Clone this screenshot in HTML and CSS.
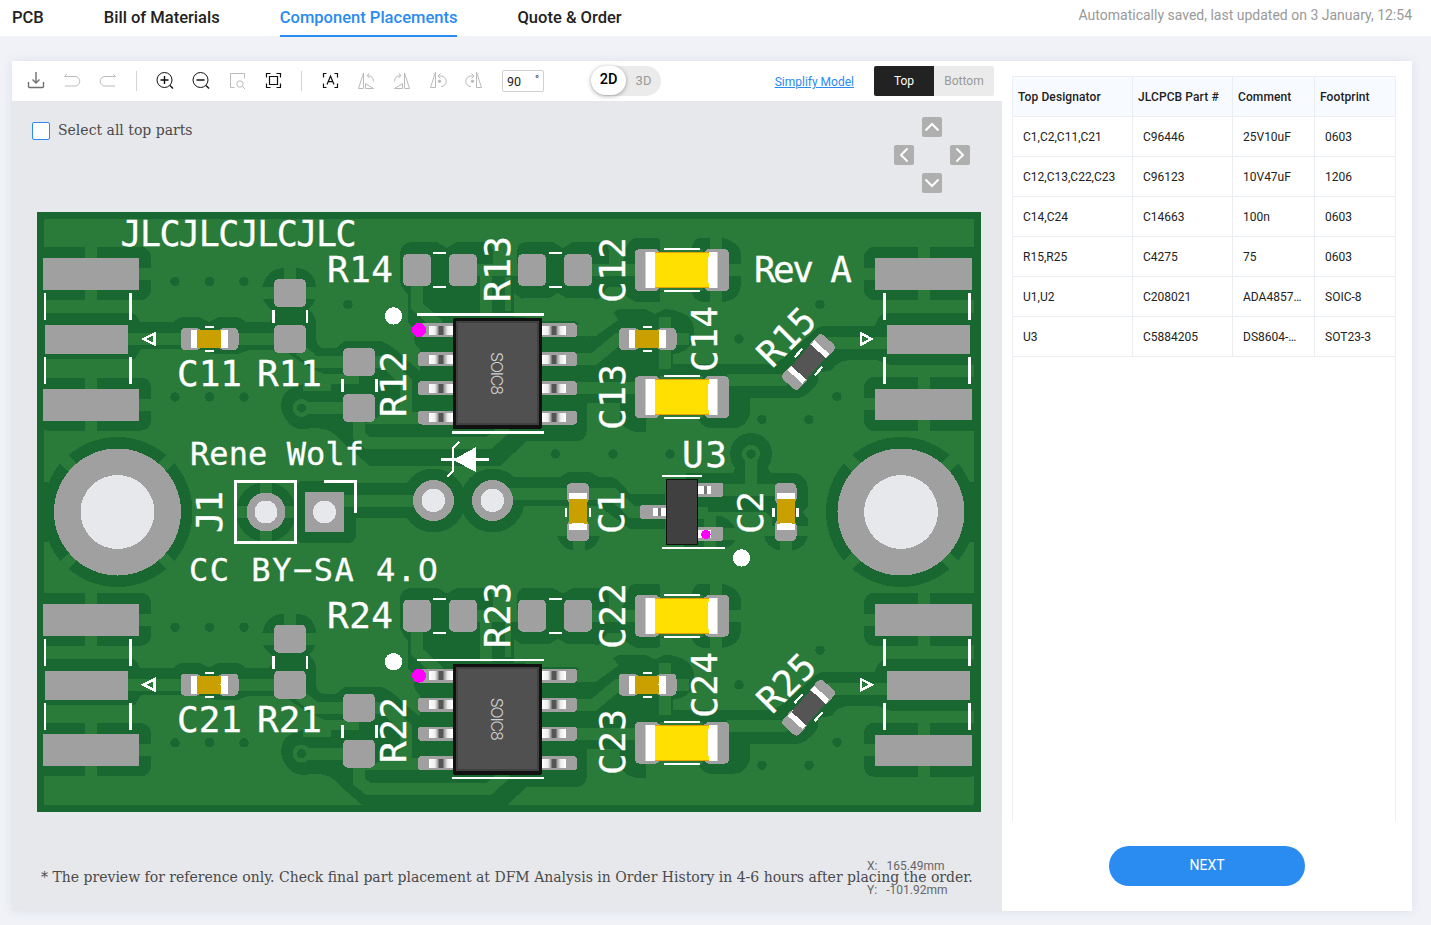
FILE: index.html
```html
<!DOCTYPE html>
<html lang="en">
<head>
<meta charset="utf-8">
<title>Component Placements</title>
<link rel="stylesheet" href="styles.css">
</head>
<body>
<header class="topbar">
  <nav class="tabs">
    <a class="tab">PCB</a><a class="tab">Bill of Materials</a><a class="tab active">Component Placements</a><a class="tab">Quote &amp; Order</a>
  </nav>
  <span class="saved">Automatically saved, last updated on 3 January, 12:54</span>
</header>
<main class="workspace">
  <section class="editor">
    <div class="toolbar">
      <div class="tools">
        <svg class="icon" viewBox="0 0 18 18" stroke="#707070"><path d="M1.500 10v4.500q0 1 1 1h13q1 0 1-1V10M9 0v10.500M5.500 7.500 9 11l3.500-3.500" stroke-width="1.400"/></svg>
        <svg class="icon" viewBox="0 0 18 18" stroke="#bbb"><path d="M4 2 1.500 4.500H12a4.500 4.500 0 0 1 0 9.500H2"/></svg>
        <svg class="icon" viewBox="0 0 18 18" stroke="#bbb"><path d="m14 2 2.500 2.500H6A4.500 4.500 0 0 0 6 14h10"/></svg>
        <i class="rule"></i>
        <svg class="icon" viewBox="0 0 18 18" stroke="#111"><circle cx="8.500" cy="8" r="7.500"/><path d="M8.500 4v8M4.500 8h8M14 13.500l3 3" stroke-width="1.400"/></svg>
        <svg class="icon" viewBox="0 0 18 18" stroke="#111"><circle cx="8.500" cy="8" r="7.500"/><path d="M4.500 8h8M14 13.500l3 3" stroke-width="1.400"/></svg>
        <svg class="icon" viewBox="0 0 18 18" stroke="#bbb"><path d="M6.500 15.500h-4v-14h14v5"/><circle cx="12" cy="12" r="3.200"/><path d="m14.500 14.500 2.500 2.500"/></svg>
        <svg class="icon" viewBox="0 0 18 18" stroke="#111"><path d="M2.500 5.500v-4h4M12.500 1.500h4v4M16.500 11.500v4h-4M6.500 15.500h-4v-4M5.500 4.500h8v8h-8z" stroke-width="1.200"/></svg>
        <i class="rule"></i>
        <svg class="icon" viewBox="0 0 18 18" stroke="#111"><path d="M2.500 5.500v-4h3M13.500 1.500h3v4M16.500 11.500v4h-3M5.500 15.500h-3v-4M6 12.500 9.500 4l3.500 8.500M7.200 9.700h4.600" stroke-width="1.200"/></svg>
        <svg class="icon" viewBox="0 0 18 18" stroke="#bbb"><path d="M6.500 1v15.500h-5zM8.500 16.500h8l-8-5zM16.500 9.500Q16.500 4 10.500 3.500M12.500 1l-2.500 2.500L12.500 6"/></svg>
        <svg class="icon flip" viewBox="0 0 18 18" stroke="#bbb"><path d="M6.500 1v15.500h-5zM8.500 16.500h8l-8-5zM16.500 9.500Q16.500 4 10.500 3.500M12.500 1l-2.500 2.500L12.500 6"/></svg>
        <svg class="icon" viewBox="0 0 18 18" stroke="#bbb"><path d="M6.500 0v15.500h-5zM9 4h3a5.300 5.300 0 0 1 0 10.600M11.500 1.500 9 4l2.500 2.500"/><circle cx="10.500" cy="9.300" r="1.200" fill="#bbb"/></svg>
        <svg class="icon flip" viewBox="0 0 18 18" stroke="#bbb"><path d="M6.500 0v15.500h-5zM9 4h3a5.300 5.300 0 0 1 0 10.600M11.500 1.500 9 4l2.500 2.500"/><circle cx="10.500" cy="9.300" r="1.200" fill="#bbb"/></svg>
      </div>
      <div class="angle"><span>90</span><span class="deg">°</span></div>
      <div class="dim"><b>2D</b><span>3D</span></div>
      <a class="simplify">Simplify Model</a>
      <div class="sides"><span class="on">Top</span><span>Bottom</span></div>
    </div>
    <div class="canvas">
      <div class="canvas-head">
        <label class="select-all"><i class="box"></i>Select all top parts</label>
        <div class="dpad">
          <svg class="arrow up" viewBox="0 0 20 20"><path d="m3.500 13.500 6.500-6.500 6.500 6.500"/></svg>
          <svg class="arrow left" viewBox="0 0 20 20"><path d="M13.500 3.500 7 10l6.500 6.500"/></svg>
          <svg class="arrow right" viewBox="0 0 20 20"><path d="m6.500 3.500 6.500 6.500-6.500 6.500"/></svg>
          <svg class="arrow down" viewBox="0 0 20 20"><path d="m3.500 6.500 6.500 6.500 6.500-6.500"/></svg>
        </div>
      </div>
      <svg class="board" viewBox="37 212 944 600" shape-rendering="crispEdges">
        <defs>
          <linearGradient id="pin"><stop offset="0" stop-color="#fff"/><stop offset=".25" stop-color="#eee"/><stop offset=".38" stop-color="#999"/><stop offset=".42" stop-color="#555"/><stop offset=".58" stop-color="#555"/><stop offset=".62" stop-color="#999"/><stop offset=".78" stop-color="#eee"/><stop offset="1" stop-color="#fff"/></linearGradient>
          <g id="soic-pin"><rect x="418" y="-7" width="40" height="14" rx="3.500" class="pad"/><rect x="429" y="-4.500" width="24" height="9" fill="url(#pin)"/><rect x="538" y="-7" width="39" height="14" rx="3.500" class="pad"/><rect x="542" y="-4.500" width="24" height="9" fill="url(#pin)"/></g>
          <g id="cap-big">
            <path class="pad" d="M640 249h16l4 3h44l4-3h16q5 0 5 5v32q0 5-5 5h-16l-4-3h-44l-4 3h-16q-5 0-5-5v-32q0-5 5-5z"/>
            <rect class="hide-gap" x="660" y="249" width="43" height="42"/>
            <rect x="645" y="252" width="73" height="36" fill="#fff"/>
            <path d="M645.500 252v36M717.500 252v36" stroke="#d0d0d0"/>
            <path d="M655 252h54q-2.500 18 0 36h-54z" fill="#ffe000"/>
            <path d="M655 252.500h54M655 287.500h54" stroke="#e8a000"/>
            <path class="silk" stroke-width="2" d="M664 249h36M664 291h36"/>
          </g>
          <g id="cap-small">
            <path class="pad" d="M-24-11h11l4 2V9l-4 2h-11q-5 0-5-5V-6q0-5 5-5zM24-11H13l-4 2V9l4 2h11q5 0 5-5V-6q0-5-5-5z"/>
            <rect x="-19" y="-9" width="37" height="18" fill="#fff"/><path d="M-13-9h25q-2 9 0 18h-25z" fill="#c9a000"/>
            <path class="silk" stroke-width="2.300" d="M-4.500-12h9M-4.500 12h9"/>
          </g>
          <g id="cross-pad"><rect x="37" y="247" width="114" height="53" rx="10" class="clear"/><path class="trace" d="M91 245v57M139 274h14"/><rect x="43" y="258" width="96" height="32" class="pad"/></g>
          <g id="channel">
            <g class="clear">
              <path d="M37 313h94q5 0 9 9h34q4-5 10-5h15l10 5 10-5h15q7 0 11 5h24l7-7-5-6q-7-6-9-12v-9q4-19 22-20h12q19 1 20 20v9q-1 6-7 12 7 7 7 14v17q2 8 8 8h12l9-7h36q14 6 22 16l17 14V350q-8-8-5-15 2-5-7-12v-28q-8-8-8-16v-27q2-9 11-10h26l10 6 10-6h26q10 0 10 10v12h24v-12q0-10 10-10h26l10 6 10-6h26q10 0 10 10v12h14q2-26 14-26h20q14 5 15 16l-1 33q-4 15-15 15h-20q-13-5-14-15h-14l-9 12h-31l-10-6-10 6h-26l-8-6v24h40q30 0 32 20l25-22q5-6 12-6h22l10 5 10-5q28 2 29 21t-16 23l-5 1v10h60v35h-60v19q0 13-15 14h-22q-15-3-16-15v-14h-33v24q0 14-10 14h-50l-27 25H370l-28-24-8-8q-6-6-22-6-16 4-24-6-12-14-3-29 10-11 34-9h40v-10h-35q-20-8-40-24H249l-11 4h-24l-10-4-20-1H141l-6 10H37z"/>
              <path d="M700 238h23q18 5 18 18v26q0 18-18 20h-20q-12-2-12-15v-35q2-14 9-14z"/>
              <path d="M671 364h95q10 0 16-5l33-29q5-4 10-4h50q2-8 8-12l8-1h90v52H890l-13-5h-27q-14 1-18 10-6 2-14 2v8q0 5-11 14-6 5-14 4h-43v16q-5 15-18 14h-22q-12-2-12-15z"/>
              <rect x="864" y="247" width="117" height="53" rx="10"/><rect x="864" y="377" width="117" height="54" rx="10"/>
            </g>
            <g class="trace">
              <path d="M128 339h147M300 350l15 12h32M303 408h42M303 385h28M359 420v16l9 7h121l18-16M417 284v22l22 20M375 362h11l20 20v26l-18 10h30M477 270h44M486 270v46M590 270h48M577 359h17l24-20h10M577 388h62M727 380h57l12-7M827 343h62M665 317v52M716 237v66M728 270h14M675 339h14M577 330h17l21-15M290 266v16M261 293h59" class="trace"/>
              <path d="M924 245v57M924 375v57M862 274h16M862 404h16M541 312h25M45 307h92M45 371h92M890 307h84M890 371h84"/>
            </g>
            <path class="fill-light" d="M523 298h70l16 7-20 25-10-9H525zM646 419l13-7 15 7v15h-28zM660 237h32v12h-32zM660 292h32v11h-32zM505 277h6v34h-6z"/>
            <circle cx="301.500" cy="408" r="9" class="fill-light"/><circle cx="301.500" cy="408" r="4.500" class="clear"/>
            <use href="#cross-pad"/><use href="#cross-pad" y="130.500"/>
            <g class="pad">
              <rect x="45" y="325" width="83" height="29"/><rect x="875" y="258" width="97" height="32"/><rect x="887" y="325" width="83" height="29"/><rect x="875" y="389" width="97" height="31"/>
              <rect x="274" y="279" width="32" height="28" rx="5"/><rect x="274" y="325" width="32" height="28" rx="5"/><rect x="343" y="348" width="32" height="28" rx="5"/><rect x="343" y="394" width="32" height="28" rx="5"/>
              <rect x="403" y="254" width="28" height="32" rx="5"/><rect x="449" y="254" width="28" height="32" rx="5"/><rect x="518" y="254" width="28" height="32" rx="5"/><rect x="564" y="254" width="28" height="32" rx="5"/>
            </g>
            <g class="clear"><circle cx="175" cy="281.500" r="4.700"/><circle cx="209.500" cy="281.500" r="4.700"/><circle cx="244" cy="281.500" r="4.700"/><circle cx="175" cy="397" r="4.700"/><circle cx="209.500" cy="397" r="4.700"/><circle cx="244" cy="397" r="4.700"/><circle cx="820" cy="304.500" r="4.700"/><circle cx="739" cy="339" r="4.700"/><circle cx="837" cy="396.500" r="4.700"/><circle cx="762" cy="419.500" r="4.700"/><circle cx="809" cy="419.500" r="4.700"/></g>
            <use href="#cap-big"/><use href="#cap-big" y="127"/>
            <use href="#cap-small" x="209.500" y="339"/><use href="#cap-small" x="647.500" y="339"/>
            <path class="silk" stroke-width="2.300" d="M45 293v27M130.500 293v27M45 357v27M130.500 357v27M884.500 293v27M969.500 293v27M884.500 357v27M969.500 357v27M273.500 310v13M307 310v13M342.500 379v13M376.500 379v13M433 253h13M433 287h13M549 253h13M549 287h13"/>
            <path class="silk" stroke-width="2.500" d="m143.500 339 11-5.500v11zM871.500 339l-10.500-5.500v11zM417 314.500h127M452 432.500h92"/>
            <use href="#soic-pin" y="330"/><use href="#soic-pin" y="359"/><use href="#soic-pin" y="388"/><use href="#soic-pin" y="417.500"/>
            <rect x="453" y="318" width="89" height="111" rx="2" fill="#111"/><rect x="456" y="321" width="83" height="104" fill="#404040"/><rect x="458" y="323" width="79" height="100" fill="#505050"/>
            <text class="chip" transform="translate(491 352) rotate(90)" textLength="43">SOIC8</text>
            <circle cx="393.500" cy="316" r="8.700" fill="#fff"/><circle cx="419" cy="330" r="7" fill="#f0f"/>
            <g transform="translate(808.500 362) rotate(-48)"><path class="pad" d="M-25-11h11V11h-11q-5 0-5-5V-6q0-5 5-5zM25-11H14V11h11q5 0 5-5V-6q0-5-5-5z"/><rect x="-20" y="-10" width="40" height="20" fill="#fff"/><rect x="-14.500" y="-10" width="29" height="20" fill="#555"/><path class="silk" stroke-width="2.300" d="M-6-13.500H6M-6 13.500H6"/></g>
          </g>
          <g id="mount"><circle r="75" class="clear"/><path class="trace" d="m-60-60 120 120M60-60-60 60"/><circle r="63.500" class="pad"/><circle r="37" fill="#e7e8ec"/></g>
          <g id="hole"><circle r="20.500" class="pad"/><circle r="11.700" fill="#e7e8ec"/></g>
        </defs>
        <rect x="37" y="212" width="944" height="600" class="clear"/><rect x="44" y="219" width="930" height="586" rx="2" class="fill-light"/>
        <use href="#channel"/><use href="#channel" y="345.700"/>
        <path class="clear" d="M37 482h11v60H37zM981 482h-11v60h11z"/>
        <use href="#mount" x="117.500" y="512"/><use href="#mount" x="901" y="512"/>
        <g class="clear"><circle cx="266" cy="512" r="30"/><rect x="295" y="481" width="61" height="62" rx="8"/><circle cx="433.500" cy="500.500" r="32"/><circle cx="492.500" cy="500.500" r="32"/><path d="M345 483h88v35h-88zM492 477h68l8-5h22l9 5h12q6 0 19 17h35v35h-35l-31-23h-76l-13 14zM557 536h43q-4 15-21 15t-22-15z"/><circle cx="751" cy="454" r="21"/><path d="M686 473h45q4 0 4-8h33q0 8 5 8h22q12 3 13 16v17l-5 6 5 7v7H772v-7l-6-7h-62v4h17q12 5 14 12v14q-5 6-15 7h-36zM764 536h44q-4 15-22 15t-22-15z"/><circle cx="348" cy="304.500" r="4.700"/><circle cx="555.500" cy="454" r="4.700"/><circle cx="613" cy="454" r="4.700"/><circle cx="670" cy="454" r="4.700"/></g>
        <path class="trace" d="M266 481v62M235 512h62M344 501h90M492 494h121l19 18h12M751 454v36M720 490h58M708 513h-10M710 514v40M723 534h20M578.500 536v18M785.500 536v18"/>
        <circle cx="751" cy="454" r="9" class="fill-light"/><circle cx="751" cy="454" r="4.700" class="clear"/>
        <use href="#hole" x="433.500" y="500.500"/><use href="#hole" x="492.500" y="500.500"/>
        <circle cx="266" cy="512" r="19.500" class="pad"/><circle cx="266" cy="512" r="11.500" fill="#e7e8ec"/>
        <rect x="305" y="492" width="39" height="40" class="pad"/><circle cx="324.500" cy="512" r="11.500" fill="#e7e8ec"/>
        <path class="silk" stroke-width="2.800" d="M235.500 481.500h60v61h-60zM324 481.500h31.500V513"/>
        <path class="silk" stroke-width="2.400" d="M441 459.500h48M459 442l-6 6v23l-6 6"/><path fill="#fff" d="M453 460 476 447v25z"/>
        <use href="#cap-small" transform="translate(578 512) rotate(90)"/><use href="#cap-small" transform="translate(785.500 512) rotate(90)"/>
        <g class="pad"><rect x="640" y="505" width="30" height="14" rx="3"/><rect x="696" y="483" width="27" height="14" rx="2"/><rect x="696" y="527" width="27" height="14" rx="2"/></g>
        <path fill="#fff" d="M653 508h14v8h-14zM697 486h14v8h-14zM697 530h14v8h-14z"/><path d="M659 508v8M705 486v8" stroke="#777" stroke-width="3"/>
        <rect x="666.500" y="479.500" width="31" height="65" fill="#404040" stroke="#111"/>
        <path class="silk" stroke-width="2" d="M662 476h40M662 548h63"/>
        <circle cx="706" cy="534.500" r="4.700" fill="#f0f"/><circle cx="741.500" cy="558" r="8.700" fill="#fff"/>
        <g class="legend">
          <text x="120.500" y="245.500" textLength="236" class="mid">JLCJLCJLCJLC</text>
          <text x="190" y="465" textLength="174" class="sm">Rene Wolf</text>
          <text x="189" y="580.500" textLength="249" class="sm">CC BY−SA 4.<tspan class="zero">0</tspan></text>
          <text x="754" y="282" textLength="98">Rev A</text>
          <text x="682" y="466.500" textLength="45">U3</text>
          <text x="177" y="386" textLength="65">C11</text><text x="257" y="386" textLength="65">R11</text>
          <text x="177" y="732" textLength="65">C21</text><text x="257" y="732" textLength="65">R21</text>
          <text x="327" y="282" textLength="66">R14</text><text x="327" y="628" textLength="66">R24</text>
          <text transform="translate(510 302) rotate(-90)" textLength="66">R13</text><text transform="translate(510 648) rotate(-90)" textLength="66">R23</text>
          <text transform="translate(406 417) rotate(-90)" textLength="66">R12</text><text transform="translate(406 763) rotate(-90)" textLength="66">R22</text>
          <text transform="translate(625 303) rotate(-90)" textLength="66">C12</text><text transform="translate(625 649) rotate(-90)" textLength="66">C22</text>
          <text transform="translate(625 430) rotate(-90)" textLength="66">C13</text><text transform="translate(625 775) rotate(-90)" textLength="66">C23</text>
          <text transform="translate(717 372) rotate(-90)" textLength="66">C14</text><text transform="translate(717 718) rotate(-90)" textLength="66">C24</text>
          <text transform="translate(772 369) rotate(-45)" textLength="66">R15</text><text transform="translate(772 715) rotate(-45)" textLength="66">R25</text>
          <text transform="translate(624 534) rotate(-90)" textLength="43">C1</text><text transform="translate(763 534) rotate(-90)" textLength="43">C2</text><text transform="translate(222 533) rotate(-90)" textLength="42">J1</text>
        </g>
      </svg>
      <p class="note">* The preview for reference only. Check final part placement at DFM Analysis in Order History in 4-6 hours after placing the order.</p>
      <div class="coords"><span>X<i>:</i>165.49mm</span><span>Y<i>:</i>-101.92mm</span></div>
    </div>
  </section>
  <aside class="parts">
    <div class="table-wrap">
      <table class="parts-table">
        <colgroup><col class="c1"><col class="c2"><col class="c3"><col class="c4"></colgroup>
        <thead><tr><th>Top Designator</th><th>JLCPCB Part #</th><th>Comment</th><th>Footprint</th></tr></thead>
        <tbody>
          <tr><td>C1,C2,C11,C21</td><td>C96446</td><td>25V10uF</td><td>0603</td></tr>
          <tr><td>C12,C13,C22,C23</td><td>C96123</td><td>10V47uF</td><td>1206</td></tr>
          <tr><td>C14,C24</td><td>C14663</td><td>100n</td><td>0603</td></tr>
          <tr><td>R15,R25</td><td>C4275</td><td>75</td><td>0603</td></tr>
          <tr><td>U1,U2</td><td>C208021</td><td>ADA4857…</td><td>SOIC-8</td></tr>
          <tr><td>U3</td><td>C5884205</td><td>DS8604-…</td><td>SOT23-3</td></tr>
        </tbody>
      </table>
    </div>
    <button class="next">NEXT</button>
  </aside>
</main>
</body>
</html>
```

FILE: styles.css
```css
* { box-sizing: border-box; }
body { margin: 0; background: #f0f2f7; font-family: Roboto, "Liberation Sans", sans-serif; color: #222; height: 925px; overflow: hidden; }
.topbar { height: 36px; background: #fff; display: flex; justify-content: space-between; }
.tabs { display: flex; gap: 60px; padding-left: 12px; }
.tab { height: 37px; font-size: 16.550px; font-weight: 500; line-height: 35px; white-space: nowrap; }
.tab.active { color: #2a8bf0; border-bottom: 2px solid #2a8bf0; }
.saved { font-size: 14px; line-height: 30px; color: #999; padding-right: 19px; }
.workspace { display: flex; width: 1400px; height: 850px; margin: 25px 0 0 12px; background: #fff; box-shadow: 0 0 10px rgba(60,80,120,.1); }
.editor { width: 990px; display: flex; flex-direction: column; }
.toolbar { height: 40px; display: flex; align-items: center; padding: 0 8px 0 15px; }
.tools { display: flex; align-items: center; gap: 18px; }
.icon { width: 18px; height: 18px; fill: none; stroke-width: 1; }
.flip { transform: scaleX(-1); }
.rule { width: 1px; height: 20px; background: #d4d4d4; margin: 0 1px; }
.angle { width: 42px; height: 22px; margin: 0 0 0 19px; border: 1px solid #d0d0d0; border-radius: 2px; display: flex; justify-content: space-between; padding: 0 4px; font-size: 12.500px; line-height: 21px; }
.deg { font-size: 11px; line-height: 18px; }
.dim { width: 70px; height: 30px; border-radius: 15px; background: #ebebeb; display: flex; margin-left: 47px; color: #999; font-size: 13px; line-height: 30px; }
.dim b { width: 35px; height: 29px; background: #fff; border-radius: 15px; color: #000; text-align: center; font-size: 14.500px; font-weight: 500; line-height: 28px; box-shadow: 0 1px 4px rgba(0,0,0,.35); }
.dim span { flex: 1; text-align: center; }
.simplify { margin-left: auto; font-size: 12px; color: #2a8bf0; text-decoration: underline; padding-top: 2px; }
.sides { display: flex; width: 120px; height: 30px; margin-left: 20px; border-radius: 2px; overflow: hidden; background: #ebebeb; color: #999; font-size: 12px; line-height: 30px; text-align: center; }
.sides span { flex: 1; }
.sides .on { background: #222; color: #fff; }
.canvas { position: relative; flex: 1; background: #e7e8ec; font-family: "DejaVu Serif", serif; font-stretch: condensed; color: #4a4a4a; }
.canvas-head { display: flex; justify-content: space-between; height: 111px; padding: 16px 32px 0 20px; }
.select-all { display: flex; gap: 8px; font-size: 15.570px; line-height: 26px; }
.box { width: 18px; height: 18px; margin-top: 5px; border: 1px solid #2a8bf0; border-radius: 2px; background: #fff; }
.dpad { display: grid; grid-template-columns: repeat(3, 20px); grid-template-rows: repeat(3, 20px); gap: 8px; }
.arrow { width: 20px; height: 20px; border-radius: 2px; background: #afafaf; fill: none; stroke: #fff; stroke-width: 2; }
.up { grid-area: 1 / 2; }
.left { grid-area: 2 / 1; }
.right { grid-area: 2 / 3; }
.down { grid-area: 3 / 2; }
.board { display: block; width: 944px; height: 600px; margin-left: 25px; }
.clear { fill: #1a6831; }
.fill-light { fill: #2a7a3a; }
.trace { stroke: #2a7a3a; stroke-width: 12; fill: none; }
.pad { fill: #a0a0a0; }
.hide-gap { fill: #2a7a3a; }
.silk { stroke: #fff; fill: none; }
.chip { font: 300 16px Inter, "Liberation Sans", sans-serif; fill: #d0d0d0; }
.legend { fill: #fff; stroke: #fff; stroke-width: .3; font-family: "DejaVu Sans Mono", monospace; font-size: 36px; font-stretch: normal; }
.legend .sm { font-size: 32px; }
.legend .mid { font-size: 35px; }
.legend .zero { font-family: "DejaVu Sans", sans-serif; }
.note { margin: 55px 0 0 29px; font-size: 15.570px; line-height: 20px; white-space: nowrap; }
.coords { position: absolute; left: 855px; bottom: 9px; display: flex; flex-direction: column; font: 12px/24px Roboto, sans-serif; color: #666; }
.coords i { display: inline-block; width: 12px; font-style: normal; }
.parts { width: 410px; padding: 15px 16px 0 10px; display: flex; flex-direction: column; align-items: center; }
.table-wrap { width: 384px; height: 745px; border: 1px solid #ebeef5; border-bottom: 0; overflow: hidden; align-self: flex-start; }
.parts-table { width: 382px; table-layout: fixed; border-collapse: separate; border-spacing: 0; font-size: 12px; }
.c1 { width: 120px; }
.c2 { width: 100px; }
.c3 { width: 82px; }
.c4 { width: 80px; }
.parts-table th, .parts-table td { height: 40px; padding: 0 0 0 10px; text-align: left; border-bottom: 1px solid #ebeef0; border-right: 1px solid #ebeef0; white-space: nowrap; font-weight: 400; }
.parts-table th:last-child, .parts-table td:last-child { border-right: 0; }
.parts-table th { background: #f7faff; padding-left: 5px; font-weight: 500; letter-spacing: .1px; }
.next { width: 196px; height: 40px; margin: 25px 0 0 6px; padding: 0 0 3px; border: 0; border-radius: 20px; background: #2a8bf0; color: #fff; font: 14px Roboto, sans-serif; }
```
